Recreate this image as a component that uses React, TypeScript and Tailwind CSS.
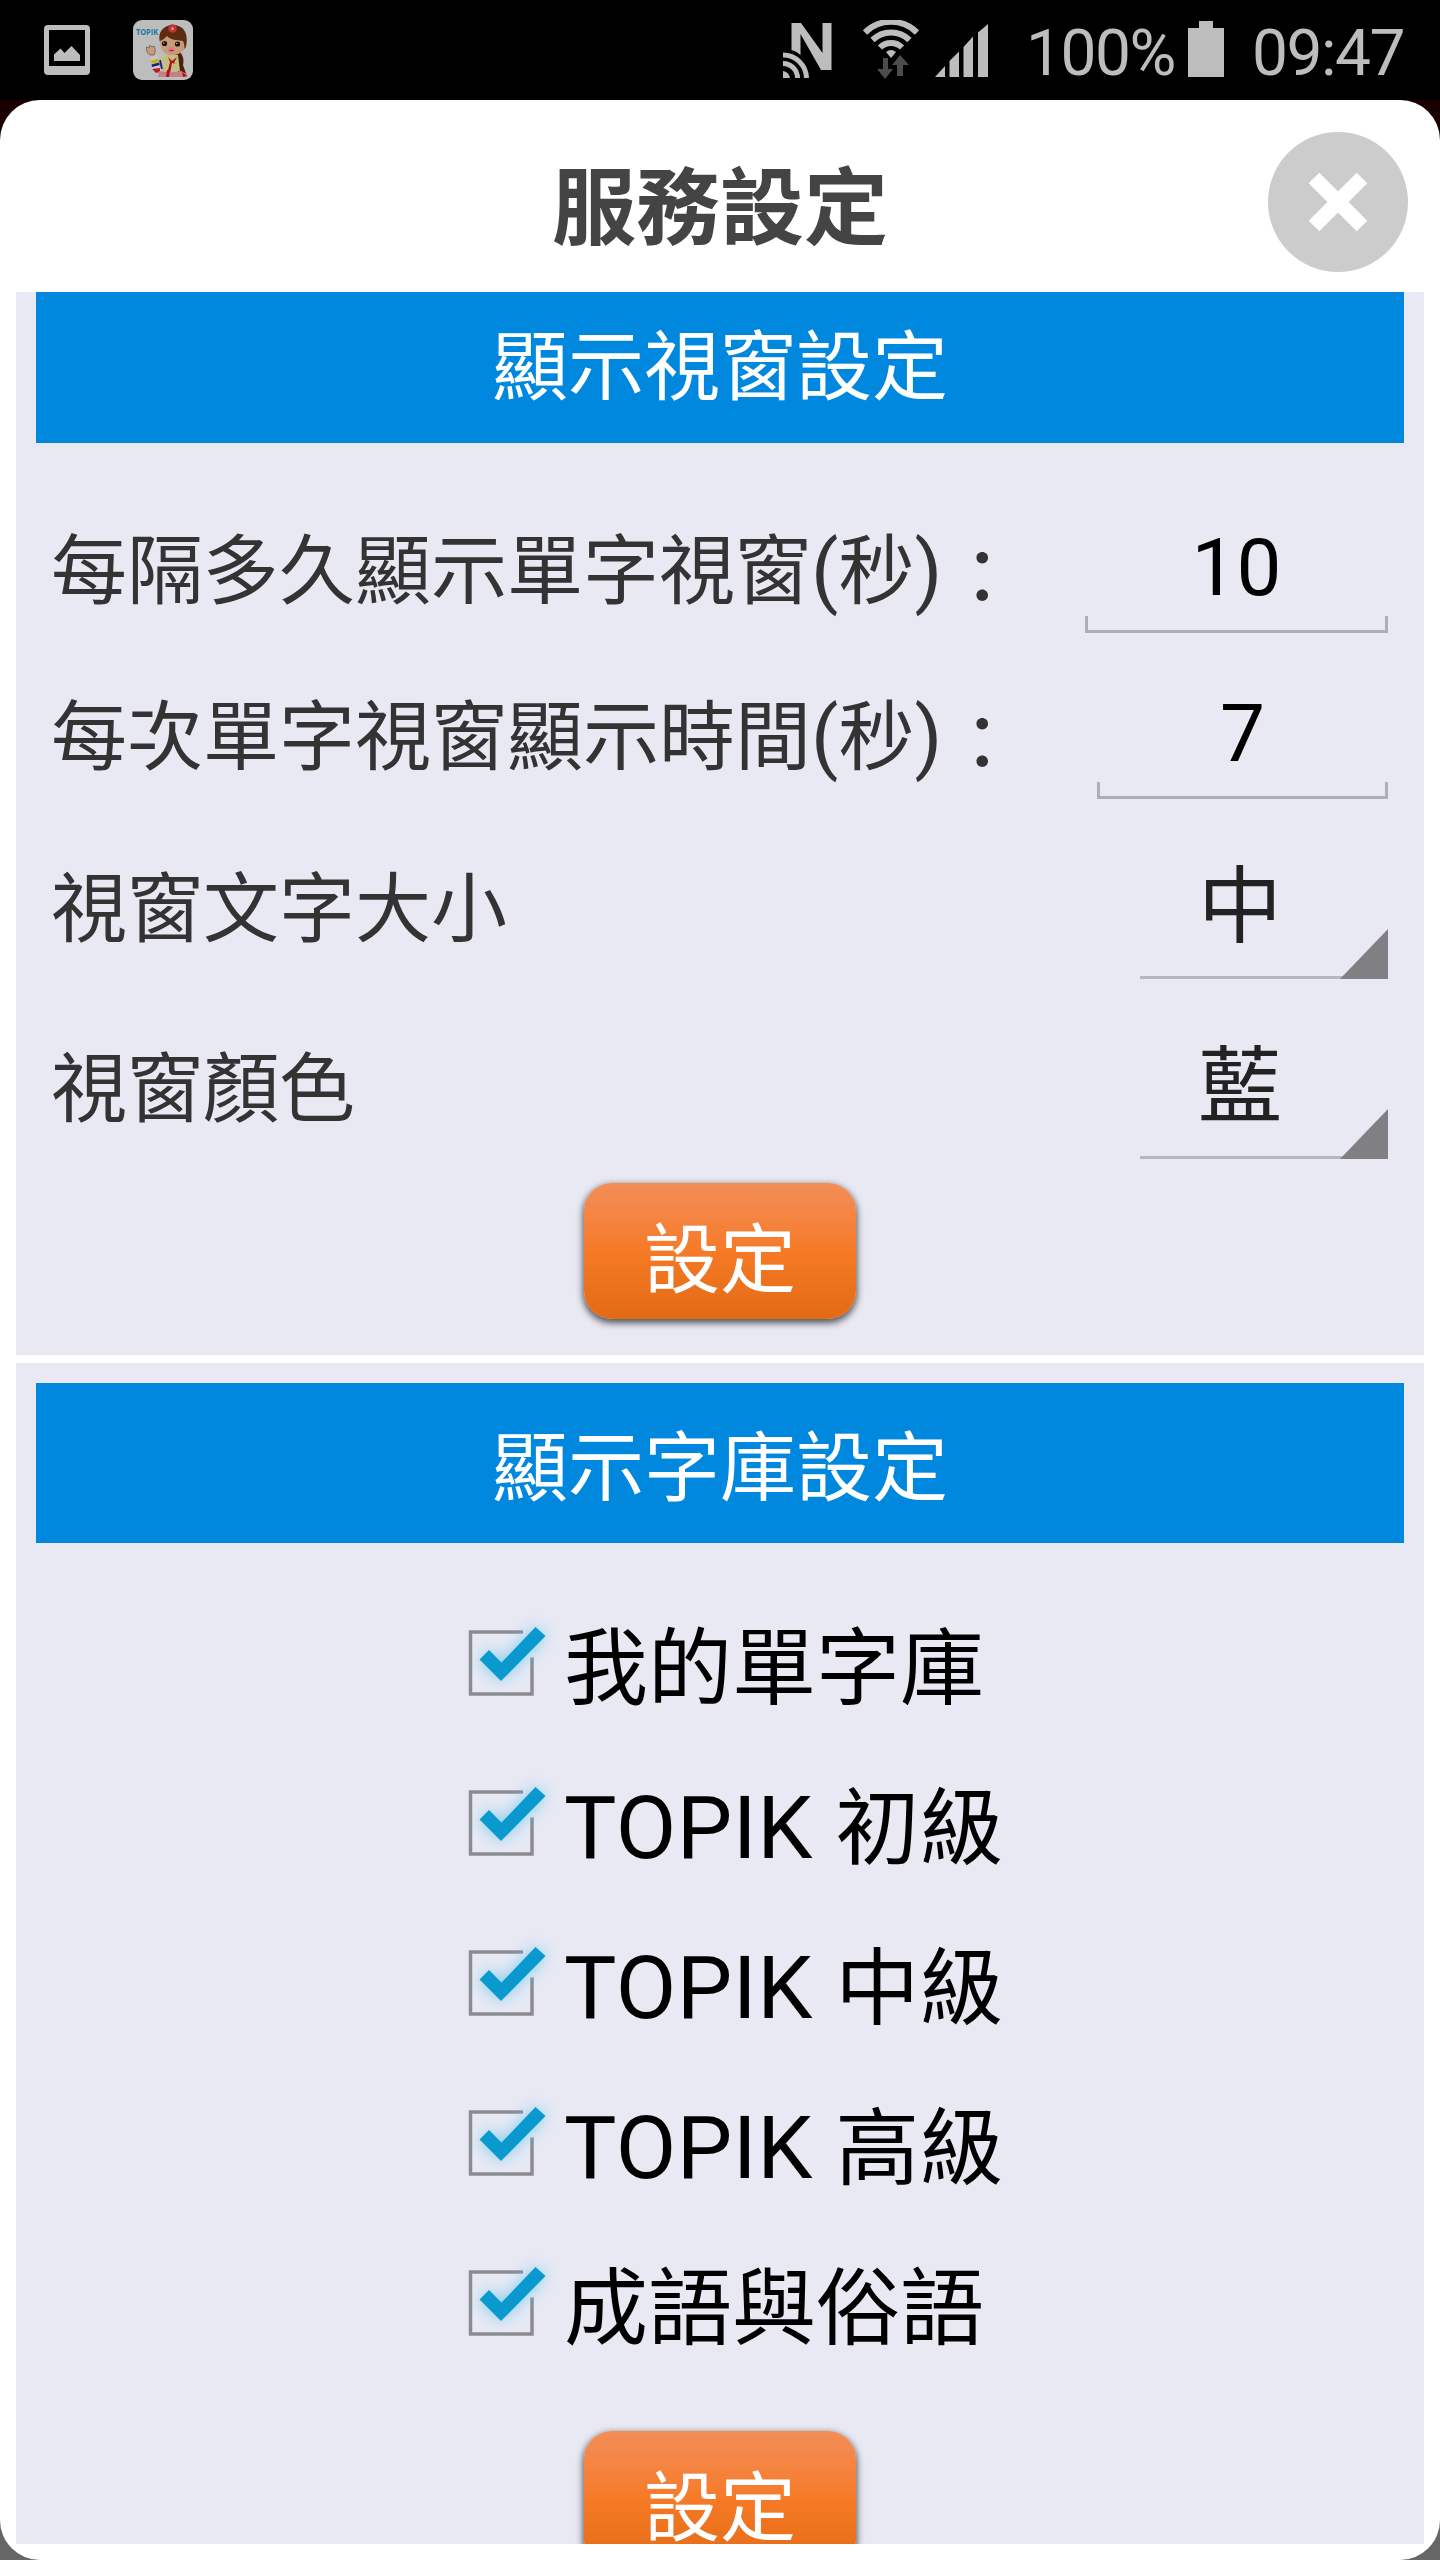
import type { ReactNode } from "react";

const LIBRARIES = [
  { latin: "", name: "我的單字庫" },
  { latin: "TOPIK ", name: "初級" },
  { latin: "TOPIK ", name: "中級" },
  { latin: "TOPIK ", name: "高級" },
  { latin: "", name: "成語與俗語" },
];

function PictureIcon() {
  return (
    <svg className="ml-11 h-[50px] w-[46px]" viewBox="0 0 46 50">
      <path fill="#bdbdbd" fillRule="evenodd" d="M4 0h38a4 4 0 0 1 4 4v42a4 4 0 0 1-4 4H4a4 4 0 0 1-4-4V4a4 4 0 0 1 4-4ZM5 5v36h36V5ZM10 36V29.500L16.500 23.500L20.500 28L27.500 21L36 30v6Z" />
    </svg>
  );
}

function AppIcon() {
  return (
    <svg className="ml-[43px] h-[60px] w-[60px]" viewBox="0 0 60 60">
      <rect width="60" height="60" rx="9" fill="#bdbdbd" />
      <text x="3" y="15" fontSize="9" fontWeight="700" fill="#147a9e" textLength="22" lengthAdjust="spacingAndGlyphs" fontFamily="Open Sans, sans-serif">TOPIK</text>
      <path d="M45 30c6 5 6 11 5 15l4 11-5 1c-5-5-6-10-5-15l-4-8Z" fill="#4a220c" />
      <path d="M27 22c-3-10 4-17 13-17s16 6 13 22l-3 3-20-4Z" fill="#5b2c12" />
      <path d="M27 21c3-1 5-3 7-5 3 4 10 4 16 5 3 6 1 10-3 12-5 3-11 3-15 0-4-3-5-8-5-12Z" fill="#c79d79" />
      <circle cx="39.500" cy="8.500" r="4.300" fill="#c2323c" />
      <circle cx="39.500" cy="8.500" r="1.500" fill="#d5a24a" />
      <circle cx="31.500" cy="23.500" r="2.600" fill="#1d1513" />
      <circle cx="44.500" cy="24" r="2.600" fill="#1d1513" />
      <circle cx="30.800" cy="23" r="0.700" fill="#ccc" />
      <circle cx="43.800" cy="23.500" r="0.700" fill="#ccc" />
      <path d="M34.500 28q4-2 8 0-.5 5-4 5t-4-5Z" fill="#d98284" />
      <path d="M36.500 30.500h4" stroke="#b02020" strokeWidth="1.200" />
      <path d="M17 35c-3-2-4-5-3.500-8l2.500 1 1-3 2 2 2-1c2 4 1 7 0 9Z" fill="#c79d79" stroke="#5a3a28" strokeWidth=".6" />
      <path d="M28 37l5-2h12l2 16H29Z" fill="#c3bf83" />
      <path d="M18 37l6-2 4 16-5 2-4-3Z" fill="#c8c8cc" />
      <path d="m18 40.500 7-2 .7 3.500-7.200 2Z" fill="#c8b414" />
      <path d="m18.500 44.500 7.500-2 .8 2.500-7.800 2Z" fill="#1b1f83" />
      <path d="m19 49 8-1 0 4-4 1Z" fill="#b51c28" />
      <path d="m27 40 2 9" stroke="#1b1f83" strokeWidth="1.800" />
      <path d="M35 37l4 4 5-4-3 6 3 1-5-1-2 11h-3l3-12Z" fill="#b3101c" />
      <path d="M26 51q10 2 22 0l6 3v3H25Z" fill="#c77f80" />
      <path d="M34 50h3l-1 7h-3Z" fill="#b3101c" />
      <path d="m49 52 5 4-4 1Z" fill="#b3101c" />
    </svg>
  );
}

function NfcIcon() {
  return (
    <svg className="h-[58px] w-[50px]" viewBox="0 0 50 58">
      <path fill="#bdbdbd" d="M8.500 1H18L39.500 31V1h9v47H38L17.500 12V33Q14 29.500 8.500 28Z" />
      <g fill="none" stroke="#bdbdbd" strokeWidth="5">
        <path d="M0 33A23.500 23.500 0 0 1 23.500 56" />
        <path d="M0 41.500A14.500 14.500 0 0 1 14.500 56" />
      </g>
      <path fill="#bdbdbd" d="M0 49q6 1 7 7H0Z" />
    </svg>
  );
}

function WifiIcon() {
  return (
    <svg className="h-[60px] w-[56px]" viewBox="0 0 56 60">
      <g fill="none" stroke="#bdbdbd" strokeWidth="6">
        <path d="M2 12.500A37 37 0 0 1 54 12.500" />
        <path d="M9.500 20A26.500 26.500 0 0 1 46.500 20" />
        <path d="M17 27.500A15.500 15.500 0 0 1 39 27.500" />
      </g>
      <path fill="#bdbdbd" d="M23 32q5-4 10 0l-5 6Z" />
      <path fill="#4c4c4c" d="M20 38h5v11h5l-8 10-8-10h6Z" />
      <path fill="#4c4c4c" d="M37 35l9 10h-6v11h-6V45h-5Z" />
    </svg>
  );
}

function SignalIcon() {
  return (
    <svg className="h-[53px] w-[53px]" viewBox="0 0 53 53">
      <path fill="#bdbdbd" d="M0 53L10 42V53ZM14.500 53V37L24 27.500V53ZM28.500 53V23L38 12.500V53ZM43 53V8.500L53 0V53Z" />
    </svg>
  );
}

function StatusBar() {
  return (
    <div className="flex h-[100px] items-center bg-black font-[Roboto,sans-serif] text-[#bdbdbd]">
      <PictureIcon />
      <AppIcon />
      <div className="ml-auto flex h-full items-start">
        <div className="mt-[22px]"><NfcIcon /></div>
        <div className="ml-[30px] mt-5"><WifiIcon /></div>
        <div className="ml-4 mt-6"><SignalIcon /></div>
        <span className="ml-[38px] mt-4 w-[162px] whitespace-nowrap text-[64px] leading-[75px] tracking-[-1.500px]">100%</span>
        <svg className="mt-[21px] h-14 w-9" viewBox="0 0 36 56"><path fill="#bdbdbd" d="M11 0h14v7h11v49H0V7h11Z" /></svg>
        <span className="ml-7 mt-4 w-[188px] whitespace-nowrap text-[64px] leading-[75px] tracking-[-1.500px]">09:47</span>
      </div>
    </div>
  );
}

function SectionTitle({ children, className }: { children: ReactNode; className: string }) {
  return (
    <h2 className={`mx-5 flex h-40 items-center justify-center bg-[#0088de] text-[76px] leading-none text-white ${className}`}>
      {children}
    </h2>
  );
}

function NumberField({ value, wide }: { value: string; wide?: boolean }) {
  return (
    <div className={`flex h-[101px] flex-col items-center text-black ${wide ? "w-[303px]" : "w-[291px]"}`}>
      <span className="h-[84px] font-[Roboto,sans-serif] text-[80px] leading-[72px]">{value}</span>
      <span className="h-[17px] w-full border-x-[3px] border-b-[3px] border-[#aeaeb6]" />
    </div>
  );
}

function Spinner({ value }: { value: string }) {
  return (
    <div className="flex h-[124px] w-[248px] flex-col text-[#222]">
      <span className="h-[73px] pr-12 text-center text-[84px] leading-[89px]">{value}</span>
      <svg className="h-[51px] w-full" viewBox="0 0 248 51">
        <path d="M0 49.500H248" stroke="#b7b7bf" strokeWidth="3" />
        <path d="M200 51L248 1V51Z" fill="#807f84" />
      </svg>
    </div>
  );
}

function Row({ label, seconds, className, children }: { label: string; seconds?: boolean; className: string; children: ReactNode }) {
  return (
    <div className={`flex justify-between pl-[35px] pr-9 text-[76px] text-[#333] ${className}`}>
      <span className="whitespace-nowrap">
        {label}
        {seconds && (
          <>
            <span className="font-[Roboto,sans-serif] text-[80px]">(</span>秒
            <span className="font-[Roboto,sans-serif] text-[80px]">)</span>
            <span className="relative left-0.5 top-[7px]">：</span>
          </>
        )}
      </span>
      {children}
    </div>
  );
}

function OrangeButton() {
  return (
    <button className="mx-auto block h-[136px] w-[272px] rounded-[28px] bg-linear-to-b from-[#f28e56] via-[#f67a26] to-[#e36a14] pt-1.5 text-[76px] leading-[128px] text-white shadow-[0_3px_7px_1px_rgba(0,0,0,0.65)]">
      設定
    </button>
  );
}

function CheckIcon() {
  return (
    <svg className="h-[90px] w-[90px] overflow-visible" viewBox="0 0 90 90">
      <path d="M54 14H1.500V76H63V39.500" fill="none" stroke="#8c8c90" strokeWidth="3.500" />
      <path d="M10.500 41.500L20 32L32.500 44.500L66.500 9L76.500 18L32 63Z" fill="#5cc3ee" className="opacity-80 blur-[8px]" />
      <path d="M10.500 41.500L20 32L32.500 44.500L66.500 9L76.500 18L32 63Z" fill="#0a99cf" />
    </svg>
  );
}

export default function App() {
  return (
    <div className="h-[2560px] w-[1440px] overflow-hidden bg-[#666] font-['Noto_Sans_CJK_TC',sans-serif]">
      <StatusBar />
      <div className="bg-linear-to-b from-[#1a0000] from-50% to-[#666] to-50%">
        <main className="flex h-[2460px] flex-col rounded-[40px] bg-white px-4 pb-4">
          <header className="grid h-48 shrink-0 grid-cols-[156px_1fr_156px] items-center">
            <span />
            <h1 className="pt-3 text-center text-[84px] font-bold leading-none text-[#444]">服務設定</h1>
            <svg className="mt-3 h-[140px] w-[140px]" viewBox="0 0 140 140">
              <circle cx="70" cy="70" r="70" fill="#ccc" />
              <path d="M46 46L94 94M94 46L46 94" stroke="#fff" strokeWidth="15" />
            </svg>
          </header>
          <div className="flex min-h-0 flex-1 flex-col gap-2 overflow-hidden">
            <section className="-mt-[9px] h-[1072px] shrink-0 bg-[#e9e9f4]">
              <SectionTitle className="pb-1">顯示視窗設定</SectionTitle>
              <Row className="mt-[76px] h-[166px] leading-[92px]" label="每隔多久顯示單字視窗" seconds>
                <div className="mt-[13px]"><NumberField value="10" wide /></div>
              </Row>
              <Row className="h-[166px] leading-[92px]" label="每次單字視窗顯示時間" seconds>
                <div className="mt-[13px]"><NumberField value="7" /></div>
              </Row>
              <Row className="h-[180px] leading-[105px]" label="視窗文字大小">
                <div className="mt-1"><Spinner value="中" /></div>
              </Row>
              <Row className="h-[152px] leading-[104px]" label="視窗顏色">
                <div className="mt-1"><Spinner value="藍" /></div>
              </Row>
              <OrangeButton />
            </section>
            <section className="h-[1300px] shrink-0 bg-[#e9e9f4] pt-5">
              <SectionTitle className="pb-0.5">顯示字庫設定</SectionTitle>
              <ul className="ml-[453px] mt-[40px] pb-[48px] text-[84px] leading-[160px] text-black">
                {LIBRARIES.map(({ latin, name }) => (
                  <li key={latin + name} className="flex h-40 items-center">
                    <CheckIcon />
                    <span className="-mt-0.5 ml-[5px] h-40 whitespace-pre">
                      <span className="font-[Roboto,sans-serif] text-[88px] tracking-[0.500px]">{latin}</span>
                      {name}
                    </span>
                  </li>
                ))}
              </ul>
              <OrangeButton />
            </section>
          </div>
        </main>
      </div>
    </div>
  );
}
